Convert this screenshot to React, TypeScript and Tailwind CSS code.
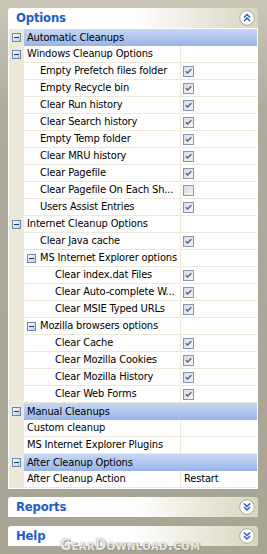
import type { ReactNode } from "react";

type Row =
  | { kind: "category"; label: string }
  | { kind: "group"; label: string; level: 0 | 1 }
  | { kind: "item"; label: string; depth: 0 | 1 | 2; checked?: boolean; value?: string };

const rows: Row[] = [
  { kind: "category", label: "Automatic Cleanups" },
  { kind: "group", label: "Windows Cleanup Options", level: 0 },
  { kind: "item", label: "Empty Prefetch files folder", depth: 1, checked: true },
  { kind: "item", label: "Empty Recycle bin", depth: 1, checked: true },
  { kind: "item", label: "Clear Run history", depth: 1, checked: true },
  { kind: "item", label: "Clear Search history", depth: 1, checked: true },
  { kind: "item", label: "Empty Temp folder", depth: 1, checked: true },
  { kind: "item", label: "Clear MRU history", depth: 1, checked: true },
  { kind: "item", label: "Clear Pagefile", depth: 1, checked: true },
  { kind: "item", label: "Clear Pagefile On Each Sh...", depth: 1, checked: false },
  { kind: "item", label: "Users Assist Entries", depth: 1, checked: true },
  { kind: "group", label: "Internet Cleanup Options", level: 0 },
  { kind: "item", label: "Clear Java cache", depth: 1, checked: true },
  { kind: "group", label: "MS Internet Explorer options", level: 1 },
  { kind: "item", label: "Clear index.dat Files", depth: 2, checked: true },
  { kind: "item", label: "Clear Auto-complete W...", depth: 2, checked: true },
  { kind: "item", label: "Clear MSIE Typed URLs", depth: 2, checked: true },
  { kind: "group", label: "Mozilla browsers options", level: 1 },
  { kind: "item", label: "Clear Cache", depth: 2, checked: true },
  { kind: "item", label: "Clear Mozilla Cookies", depth: 2, checked: true },
  { kind: "item", label: "Clear Mozilla History", depth: 2, checked: true },
  { kind: "item", label: "Clear Web Forms", depth: 2, checked: true },
  { kind: "category", label: "Manual Cleanups" },
  { kind: "item", label: "Custom cleanup", depth: 0 },
  { kind: "item", label: "MS Internet Explorer Plugins", depth: 0 },
  { kind: "category", label: "After Cleanup Options" },
  { kind: "item", label: "After Cleanup Action", depth: 0, value: "Restart" },
];

const depthPadding = ["pl-[3px]", "pl-[16px]", "pl-[31px]"];

function MinusBox() {
  return (
    <svg width="9" height="9" viewBox="0 0 9 9" className="shrink-0">
      <defs>
        <linearGradient id="mb" x1="0" y1="0" x2="1" y2="1">
          <stop offset="0" stopColor="#ffffff" />
          <stop offset="1" stopColor="#b9c8e4" />
        </linearGradient>
      </defs>
      <rect x="0.5" y="0.5" width="8" height="8" fill="url(#mb)" stroke="#6f86ad" />
      <rect x="2" y="4" width="5" height="1" fill="#1d3866" />
    </svg>
  );
}

function CheckBox({ checked }: { checked: boolean }) {
  return (
    <svg width="11" height="11" viewBox="0 0 11 11" className="shrink-0">
      <defs>
        <linearGradient id="cb" x1="0" y1="0" x2="1" y2="1">
          <stop offset="0" stopColor="#d9dae0" />
          <stop offset="1" stopColor="#f6f6f3" />
        </linearGradient>
      </defs>
      <rect x="0.5" y="0.5" width="10" height="10" fill="url(#cb)" stroke="#8796b2" />
      {checked && (
        <path d="M2.8 5.2 L4.6 7.1 L8.3 3.3" fill="none" stroke="#4f6289" strokeWidth="1.4" />
      )}
    </svg>
  );
}

function RoundButton({ up }: { up: boolean }) {
  const chevrons = up
    ? "M5 7.5 L8 4.5 L11 7.5 M5 11 L8 8 L11 11"
    : "M5 4.5 L8 7.5 L11 4.5 M5 8 L8 11 L11 8";
  return (
    <svg width="16" height="16" viewBox="0 0 16 16">
      <circle cx="8" cy="8" r="7.3" fill="#ffffff" stroke="#aeaa9a" />
      <path d={chevrons} fill="none" stroke="#2a5fc5" strokeWidth="1.5" />
    </svg>
  );
}

function PaneHeader({ title, up }: { title: string; up: boolean }) {
  return (
    <div className="flex h-[20px] items-center justify-between rounded-t-[3px] bg-gradient-to-r from-white via-white to-[#d9d5c1] pr-[3px] pl-[8px]">
      <span className="text-[13px] leading-[20px] font-bold tracking-[-0.2px] text-[#215dc6]">
        {title}
      </span>
      <RoundButton up={up} />
    </div>
  );
}

function TreeRow({ row }: { row: Row }) {
  let gutter: ReactNode = null;
  let body: ReactNode;

  if (row.kind === "category") {
    gutter = <MinusBox />;
    body = (
      <div className="flex flex-1 items-center bg-gradient-to-b from-[#c8d8f4] to-[#98b4e6] pl-[3px]">
        {row.label}
      </div>
    );
  } else {
    if (row.kind === "group" && row.level === 0) gutter = <MinusBox />;

    const name =
      row.kind === "group" ? (
        row.level === 0 ? (
          <span className="pl-[3px]">{row.label}</span>
        ) : (
          <span className="flex items-center gap-[4px] pl-[3px]">
            <MinusBox />
            {row.label}
          </span>
        )
      ) : (
        <span className={depthPadding[row.depth]}>{row.label}</span>
      );

    body = (
      <div className="flex flex-1 border-b border-[#ece9d8] bg-white">
        <div className="flex w-[157px] items-center overflow-hidden border-r border-[#ece9d8] whitespace-nowrap">
          {name}
        </div>
        <div className="flex flex-1 items-center pl-[2px]">
          {row.kind === "item" && row.checked !== undefined && <CheckBox checked={row.checked} />}
          {row.kind === "item" && row.value && <span className="pl-[1px]">{row.value}</span>}
        </div>
      </div>
    );
  }

  return (
    <div className="flex h-[17px]">
      <div className="flex w-[15px] shrink-0 items-center justify-center bg-[#ece9d8]">{gutter}</div>
      {body}
    </div>
  );
}

export default function App() {
  return (
    <div
      className="relative h-[554px] w-[267px] overflow-hidden bg-gradient-to-b from-[#cbc8b9] via-[#aeab9c] via-20% to-[#a8a595] pt-[8px] text-[11px] leading-[16px] tracking-[-0.15px] text-black"
      style={{ fontFamily: '"DejaVu Sans Condensed", "DejaVu Sans", sans-serif' }}
    >
      <div className="mx-[8px] w-[250px]">
        <PaneHeader title="Options" up />
        <div className="border border-white bg-white">
          {rows.map((row) => (
            <TreeRow key={row.label} row={row} />
          ))}
        </div>
      </div>

      <div className="mx-[8px] mt-[8px] w-[250px]">
        <PaneHeader title="Reports" up={false} />
      </div>
      <div className="mx-[8px] mt-[9px] w-[250px]">
        <PaneHeader title="Help" up={false} />
      </div>

      <div
        className="absolute top-[537px] left-[60px] text-[15px] leading-[16px] font-bold tracking-[0.5px] text-white/80"
        style={{ fontVariant: "small-caps", textShadow: "0 0 1px #8a8778, 1px 1px 0 #9c998a" }}
      >
        GearDownload.com
      </div>
    </div>
  );
}
